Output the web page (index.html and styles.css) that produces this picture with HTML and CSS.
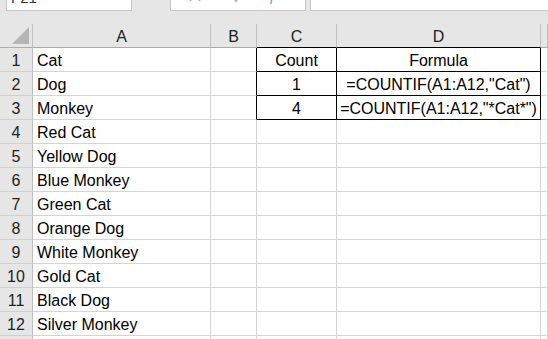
FILE: index.html
```html
<!DOCTYPE html>
<html lang="en">
<head>
    <meta charset="UTF-8">
    <title>COUNTIF - Sheet1</title>
    <link rel="stylesheet" href="styles.css">
</head>
<body>
    <div class="formula-bar">
        <div class="name-box">F21</div>
        <div class="grip">&#8942;</div>
        <div class="fx-box">
            <svg class="fx-icon" width="14" height="14" viewBox="0 0 14 14"><path d="M2 2 L12 12 M12 2 L2 12" stroke="#b8b8b8" stroke-width="1.6" fill="none"/></svg>
            <svg class="fx-icon" width="14" height="14" viewBox="0 0 14 14"><path d="M1 6 L6 12 L13 1" stroke="#b8b8b8" stroke-width="2" fill="none"/></svg>
            <span class="fx-label">fx</span>
        </div>
        <div class="formula-input"></div>
    </div>

    <div class="sheet">
        <!-- column headers -->
        <div class="corner"><div class="corner-tri"></div></div>
        <div class="col-head">A</div>
        <div class="col-head">B</div>
        <div class="col-head edge-b">C</div>
        <div class="col-head edge-b">D</div>
        <div class="col-head"></div>

        <div class="row-head">1</div>
        <div class="cell">Cat</div>
        <div class="cell edge-r"></div>
        <div class="cell boxed center">Count</div>
        <div class="cell boxed center">Formula</div>
        <div class="cell"></div>

        <div class="row-head">2</div>
        <div class="cell">Dog</div>
        <div class="cell edge-r"></div>
        <div class="cell boxed center">1</div>
        <div class="cell boxed center">=COUNTIF(A1:A12,"Cat")</div>
        <div class="cell"></div>

        <div class="row-head">3</div>
        <div class="cell">Monkey</div>
        <div class="cell edge-r"></div>
        <div class="cell boxed center">4</div>
        <div class="cell boxed center">=COUNTIF(A1:A12,"*Cat*")</div>
        <div class="cell"></div>

        <div class="row-head">4</div>
        <div class="cell">Red Cat</div>
        <div class="cell"></div><div class="cell"></div><div class="cell"></div><div class="cell"></div>

        <div class="row-head">5</div>
        <div class="cell">Yellow Dog</div>
        <div class="cell"></div><div class="cell"></div><div class="cell"></div><div class="cell"></div>

        <div class="row-head">6</div>
        <div class="cell">Blue Monkey</div>
        <div class="cell"></div><div class="cell"></div><div class="cell"></div><div class="cell"></div>

        <div class="row-head">7</div>
        <div class="cell">Green Cat</div>
        <div class="cell"></div><div class="cell"></div><div class="cell"></div><div class="cell"></div>

        <div class="row-head">8</div>
        <div class="cell">Orange Dog</div>
        <div class="cell"></div><div class="cell"></div><div class="cell"></div><div class="cell"></div>

        <div class="row-head">9</div>
        <div class="cell">White Monkey</div>
        <div class="cell"></div><div class="cell"></div><div class="cell"></div><div class="cell"></div>

        <div class="row-head">10</div>
        <div class="cell">Gold Cat</div>
        <div class="cell"></div><div class="cell"></div><div class="cell"></div><div class="cell"></div>

        <div class="row-head">11</div>
        <div class="cell">Black Dog</div>
        <div class="cell"></div><div class="cell"></div><div class="cell"></div><div class="cell"></div>

        <div class="row-head">12</div>
        <div class="cell">Silver Monkey</div>
        <div class="cell"></div><div class="cell"></div><div class="cell"></div><div class="cell"></div>

        <div class="row-head"></div>
        <div class="cell"></div><div class="cell"></div><div class="cell"></div><div class="cell"></div><div class="cell"></div>
    </div>
</body>
</html>
```

FILE: styles.css
```css
body {
    margin: 0;
    background-color: #e6e6e6;
    font-family: "Liberation Sans", Arial, sans-serif;
    overflow: hidden;
}
.formula-bar {
    display: flex;
    height: 30px;
    margin-top: -19px;
}
.name-box {
    box-sizing: border-box;
    margin-left: 6px;
    width: 126px;
    background-color: #ffffff;
    border: 1px solid #c6c6c6;
    padding: 0 0 0 4px;
    font-size: 15px;
    line-height: 32px;
    color: #333;
    overflow: hidden;
}
.grip {
    width: 38px;
    text-align: center;
    color: #888;
    font-size: 16px;
    line-height: 24px;
}
.fx-box {
    box-sizing: border-box;
    width: 136px;
    background-color: #ffffff;
    border: 1px solid #c6c6c6;
    display: flex;
    align-items: flex-end;
    padding: 0 0 6px 17px;
    gap: 28px;
}
.fx-icon {
    margin-bottom: 1px;
}
.fx-label {
    font-family: "Liberation Serif", serif;
    font-style: italic;
    font-size: 16px;
    color: #999;
    line-height: 18px;
    margin-left: -2px;
}
.formula-input {
    flex: 1;
    margin-left: 4px;
    background-color: #ffffff;
    border: 1px solid #c6c6c6;
    border-right: none;
}
.sheet {
    margin-top: 13px;
    display: grid;
    grid-template-columns: 33px 178px 46px 80px 204px 1fr;
    grid-auto-rows: 24px;
    background-color: #ffffff;
    font-size: 16px;
}
.corner, .col-head, .row-head, .cell {
    box-sizing: border-box;
    white-space: nowrap;
}
.corner {
    background-color: #e6e6e6;
    border-right: 1px solid #c0c0c0;
    border-bottom: 1px solid #ababab;
    position: relative;
}
.corner-tri {
    position: absolute;
    right: 3px;
    bottom: 3px;
    width: 0;
    height: 0;
    border-left: 17px solid transparent;
    border-bottom: 17px solid #b5b5b5;
}
.col-head {
    background-color: #e6e6e6;
    border-right: 1px solid #bfbfbf;
    border-bottom: 1px solid #ababab;
    text-align: center;
    line-height: 26px;
    color: #222;
}
.row-head {
    background-color: #e6e6e6;
    border-right: 1px solid #bfbfbf;
    border-bottom: 1px solid #d0d0d0;
    text-align: center;
    line-height: 26px;
    color: #222;
}
.cell {
    border-right: 1px solid #d4d4d4;
    border-bottom: 1px solid #d4d4d4;
    padding-left: 4px;
    line-height: 26px;
    color: #000;
}
.center {
    padding-left: 0;
    text-align: center;
    display: flex;
    justify-content: center;
}
.boxed {
    border-right-color: #000;
    border-bottom-color: #000;
}
.edge-r {
    border-right-color: #000;
}
.edge-b {
    border-bottom-color: #000;
}
```
